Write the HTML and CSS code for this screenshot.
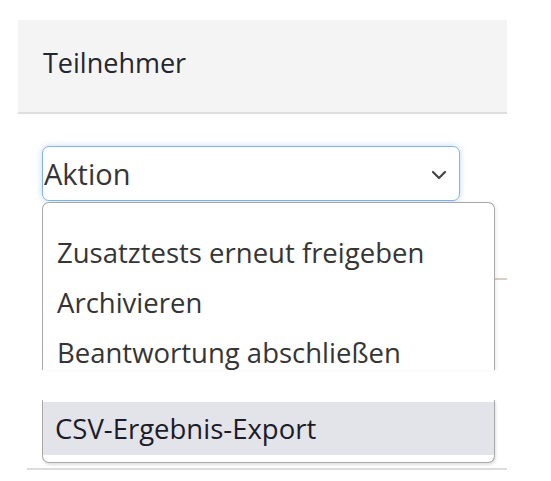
FILE: index.html
```html
<!DOCTYPE html>
<html lang="de">
<head>
<meta charset="utf-8">
<link rel="stylesheet" href="styles.css">
</head>
<body>
<div class="page">
  <div class="header"><span class="title">Teilnehmer</span></div>
  <div class="content">
    <div class="select">
      <span class="select-label">Aktion</span>
      <svg class="chevron" width="16" height="10" viewBox="0 0 16 10"><path d="M2 2 L8 8 L14 2" fill="none" stroke="#444" stroke-width="2.2" stroke-linecap="round" stroke-linejoin="round"/></svg>
    </div>
    <div class="row-line"></div>
    <span class="tick"></span>
    <div class="menu">
      <div class="menu-top">
        <div class="item">Zusatztests erneut freigeben</div>
        <div class="item">Archivieren</div>
        <div class="item">Beantwortung abschließen</div>
      </div>
      <div class="menu-gap"></div>
      <div class="menu-bottom">
        <div class="item selected">CSV-Ergebnis-Export</div>
      </div>
    </div>
  </div>
</div>
</body>
</html>
```

FILE: styles.css
```css
html, body {
  margin: 0;
  padding: 0;
  background: #ffffff;
}
body {
  font-family: "Open Sans", "Noto Sans", sans-serif;
  color: #3a3a3a;
}
.page {
  position: relative;
  width: 551px;
  height: 481px;
  overflow: hidden;
}
.header {
  margin: 20px 0 0 18px;
  width: 489px;
  height: 94px;
  background: #f4f4f4;
  border-bottom: 2px solid #dedede;
  box-sizing: border-box;
  display: flex;
  align-items: center;
  padding-left: 25px;
  padding-bottom: 8px;
}
.title {
  font-size: 27px;
  color: #262630;
}
.content {
  position: relative;
  padding: 32px 0 0 42px;
}
.select {
  width: 418px;
  height: 55px;
  box-sizing: border-box;
  border: 1.5px solid #84b4e2;
  border-radius: 7px;
  box-shadow: 0 0 6px rgba(120, 170, 230, 0.45);
  display: flex;
  align-items: center;
  justify-content: space-between;
  padding: 0 12px 0 1px;
  background: #fff;
}
.select-label {
  font-size: 29px;
  color: #353535;
}
.chevron {
  margin-top: 2px;
}
.row-line {
  position: absolute;
  left: 27px;
  top: 354px;
  width: 480px;
  height: 2px;
  background: #dcdcdc;
}
.tick {
  position: absolute;
  left: 495px;
  top: 164px;
  width: 12px;
  height: 2px;
  background: #d9cfc4;
}
.menu {
  position: absolute;
  left: 42px;
  top: 88px;
  width: 453px;
  display: flex;
  flex-direction: column;
}
.menu-top {
  height: 168px;
  box-sizing: border-box;
  border: 1.5px solid #a8a8a8;
  border-bottom: none;
  border-radius: 7px 7px 0 0;
  background: #fff;
  padding-top: 25px;
  box-shadow: 2px 0 3px rgba(0,0,0,0.06);
}
.menu-gap {
  height: 30px;
}
.menu-bottom {
  height: 63px;
  box-sizing: border-box;
  border: 1.5px solid #a8a8a8;
  border-top: none;
  border-radius: 0 0 7px 7px;
  background: #fff;
  padding-top: 2px;
  box-shadow: 1px 2px 3px rgba(0,0,0,0.12);
}
.item {
  font-size: 27.5px;
  height: 50px;
  line-height: 50px;
  padding-left: 14px;
  color: #353535;
  white-space: nowrap;
}
.item.selected {
  background: #e3e3ea;
  height: 53px;
  line-height: 53px;
  padding-left: 12px;
  color: #1c1c28;
}
```
